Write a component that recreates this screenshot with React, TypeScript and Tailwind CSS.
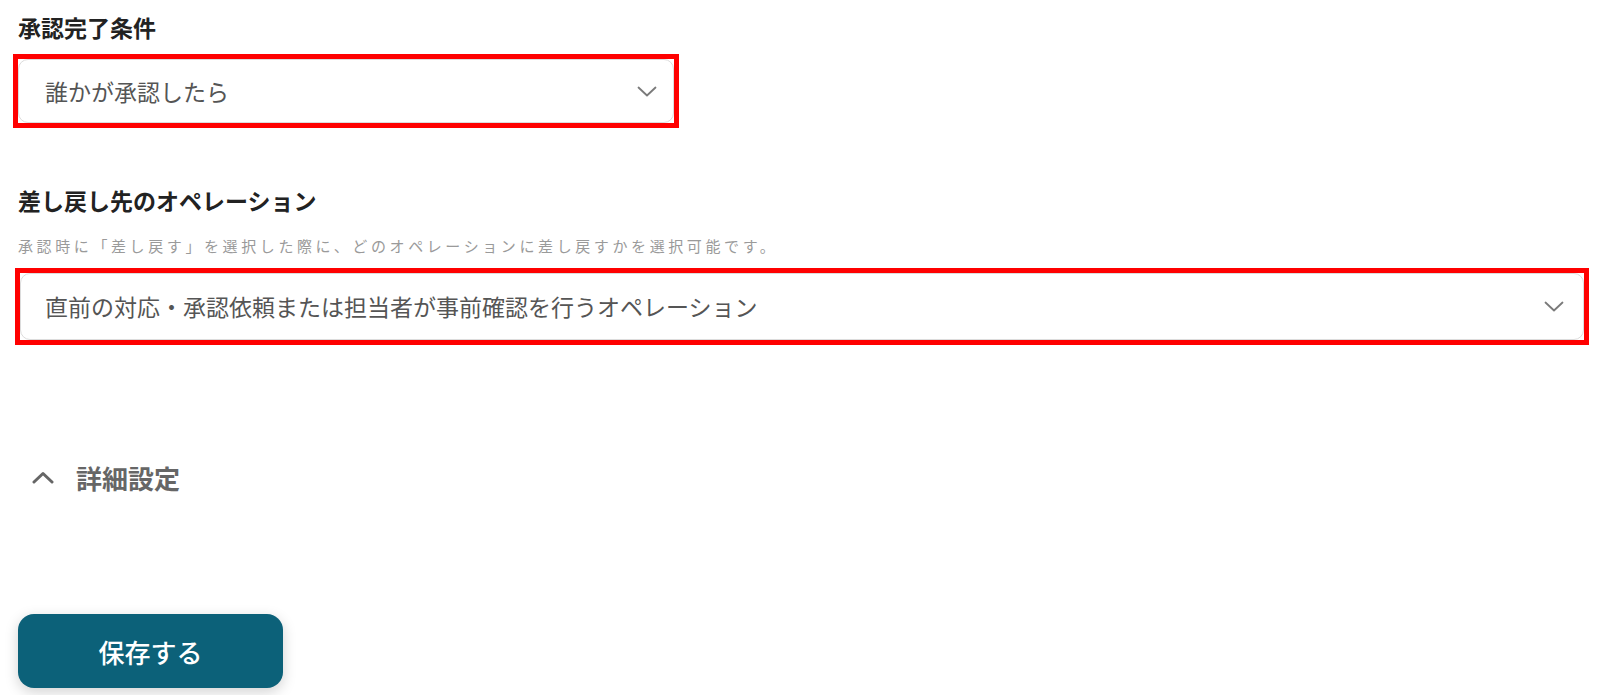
import React from "react";

const font = { fontFamily: '"Noto Sans CJK JP", "Noto Sans", sans-serif' };

function ChevronDown() {
  return (
    <svg width="20" height="11" viewBox="0 0 20 11" fill="none" className="shrink-0">
      <polyline points="1.5,1.5 10,9.5 18.5,1.5" stroke="#7a7a7a" strokeWidth="1.8" strokeLinecap="round" strokeLinejoin="round" />
    </svg>
  );
}

function ChevronUp() {
  return (
    <svg width="22" height="13" viewBox="0 0 22 13" fill="none" className="shrink-0">
      <polyline points="2,11 11,2.5 20,11" stroke="#666666" strokeWidth="3" strokeLinecap="round" strokeLinejoin="round" />
    </svg>
  );
}

export default function App() {
  return (
    <div className="w-[1600px] h-[695px] bg-white overflow-hidden" style={font}>
      <div className="pt-[11px] pl-[18px] text-[23px] leading-[32px] font-bold text-[#222]">承認完了条件</div>

      {/* 承認完了条件 select */}
      <div className="mt-[11px] ml-[13px] w-[666px] h-[74px] border-[5px] border-[#ff0000]">
        <div className="h-full flex items-center justify-between rounded-[10px] border border-[#dcdcdc] bg-white pl-[26px] pr-[16px]">
          <span className="text-[23px] text-[#555]">誰かが承認したら</span>
          <ChevronDown />
        </div>
      </div>

      <div className="mt-[56px] pl-[18px] text-[23px] leading-[32px] font-bold text-[#222]">差し戻し先のオペレーション</div>
      <div className="mt-[18px] pl-[18px] text-[15px] leading-[24px] tracking-[3.6px] text-[#9a9a9a]">
        承認時に「差し戻す」を選択した際に、どのオペレーションに差し戻すかを選択可能です。
      </div>

      {/* 差し戻し先 select */}
      <div className="mt-[10px] ml-[15px] w-[1574px] h-[77px] border-[5px] border-[#ff0000]">
        <div className="h-full flex items-center justify-between rounded-[10px] border border-[#dcdcdc] bg-white pl-[24px] pr-[19px]">
          <span className="text-[23px] text-[#555]">直前の対応・承認依頼または担当者が事前確認を行うオペレーション</span>
          <ChevronDown />
        </div>
      </div>

      <div className="mt-[116px] ml-[32px] h-[32px] flex items-center gap-[22px]">
        <ChevronUp />
        <span className="text-[26px] font-semibold text-[#666]">詳細設定</span>
      </div>

      <div className="mt-[121px] ml-[18px]">
        <button className="w-[265px] h-[74px] rounded-[16px] bg-[#0c6179] text-white text-[26px] font-medium shadow-[0_4px_14px_rgba(0,0,0,0.18)]">
          保存する
        </button>
      </div>
    </div>
  );
}
